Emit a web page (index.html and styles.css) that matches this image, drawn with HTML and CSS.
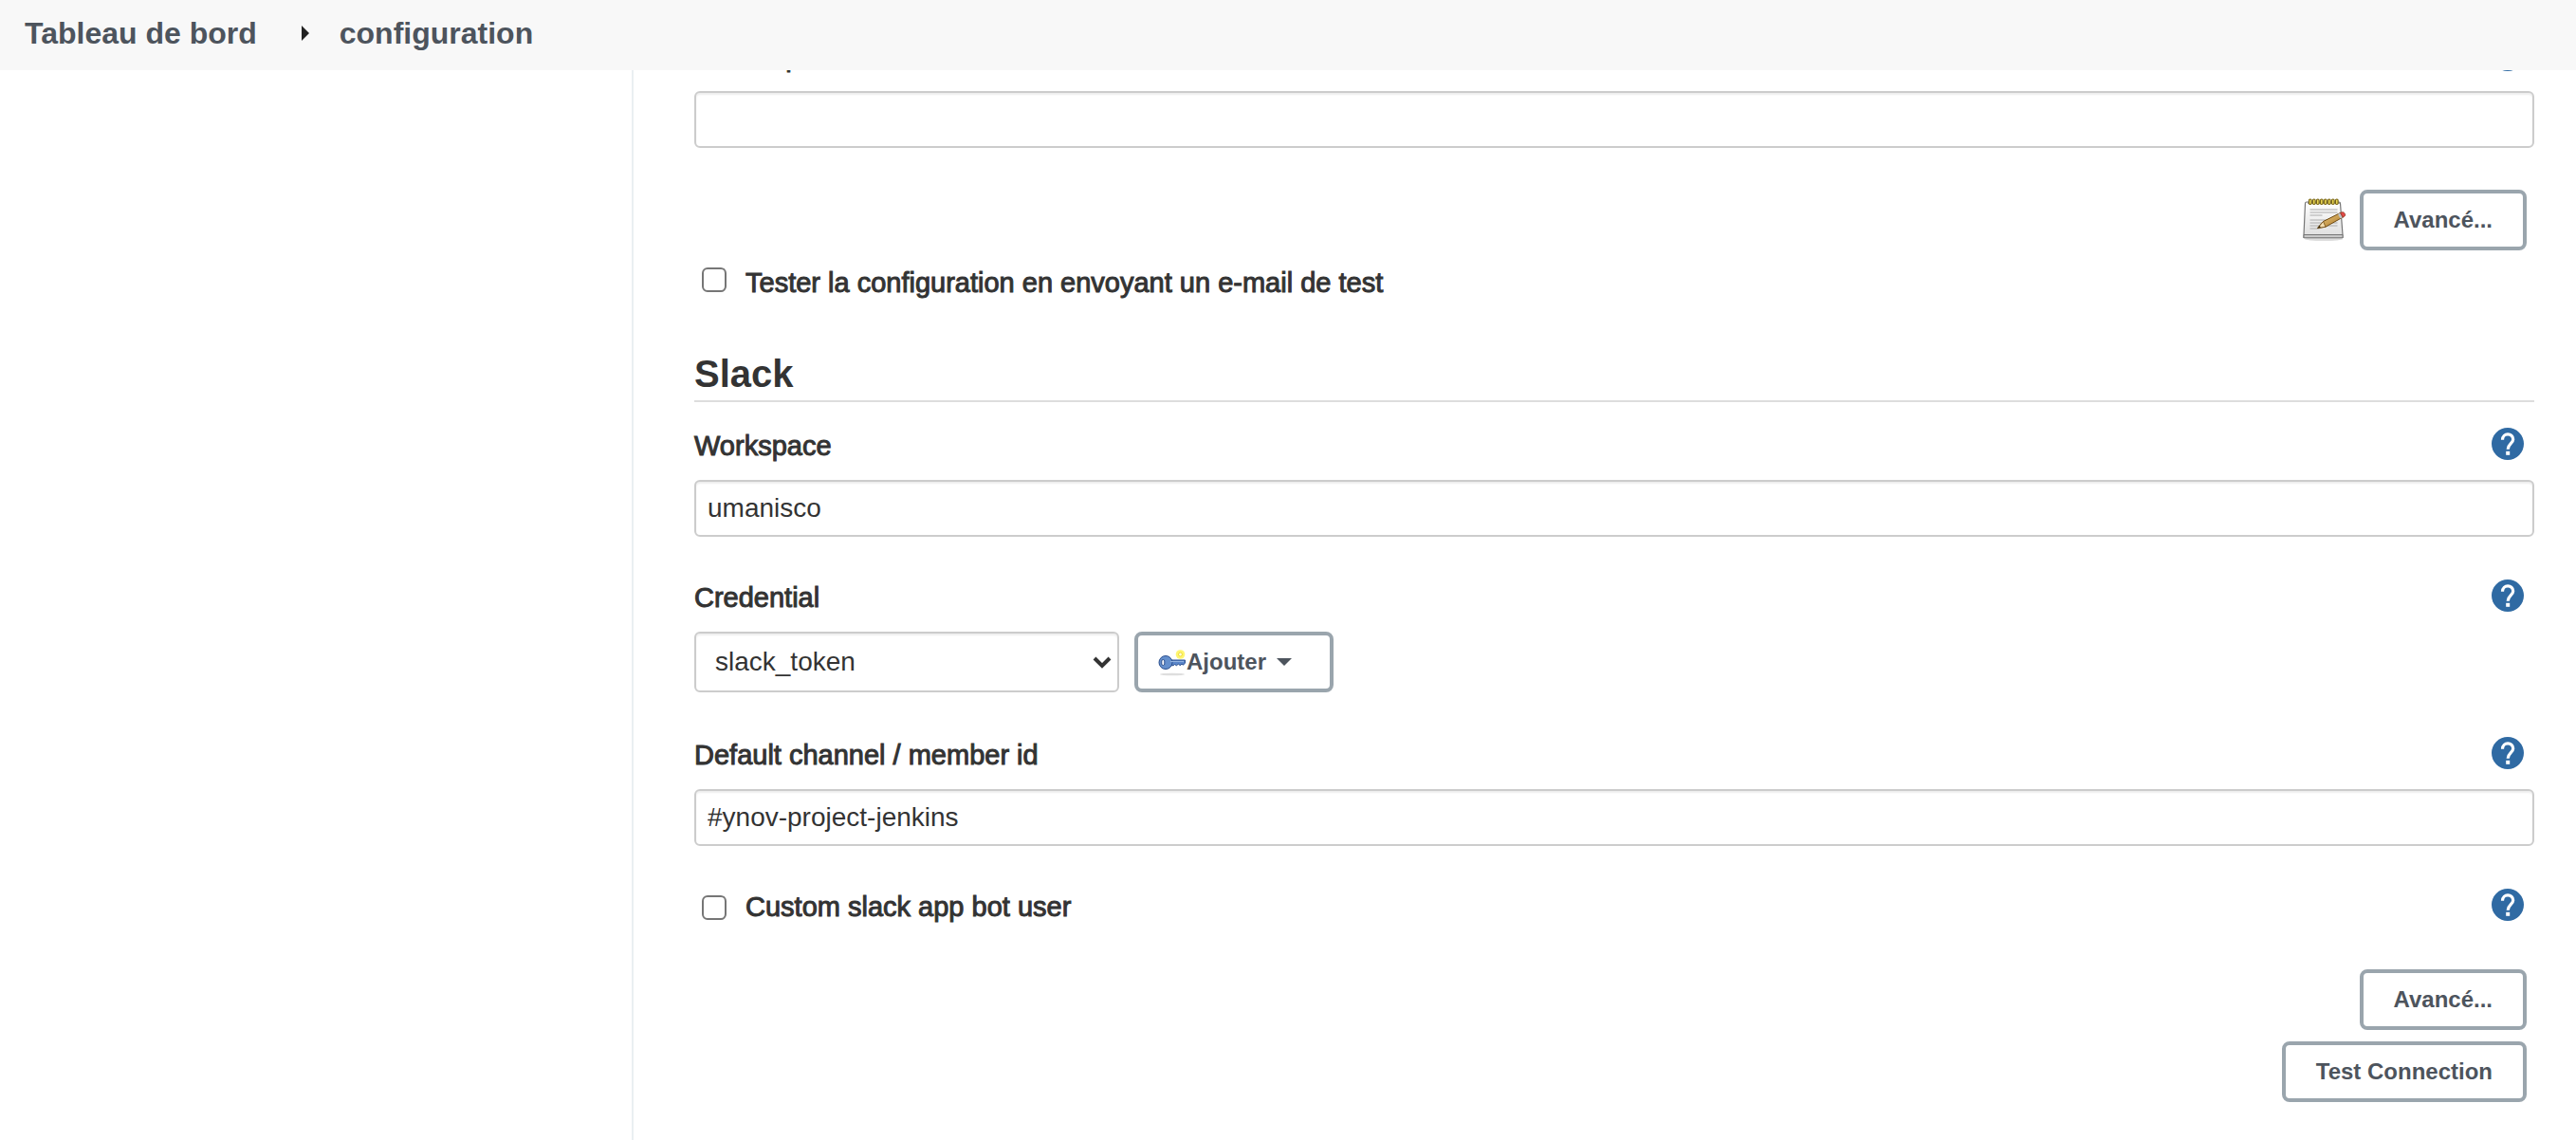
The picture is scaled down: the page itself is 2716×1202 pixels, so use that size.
FILE: index.html
```html
<!DOCTYPE html>
<html lang="fr">
<head>
<meta charset="utf-8">
<title>configuration</title>
<link rel="stylesheet" href="styles.css">
</head>
<body>
<svg class="sprite" aria-hidden="true">
  <symbol id="help" viewBox="0 0 34 34">
    <circle cx="17" cy="17" r="17" fill="#2f6aa3"/>
    <path d="M11.500 12.700C11.500 4.800 22.700 5.200 22.700 12.200C22.700 16.500 17.200 17 17.200 22.800" fill="none" stroke="#fff" stroke-width="3.200"/>
    <rect x="15.200" y="24.800" width="4" height="4" fill="#fff"/>
  </symbol>
</svg>
<header class="topbar">
  <nav class="crumbs" aria-label="Fil d'Ariane">
    <a href="#">Tableau de bord</a>
    <svg class="crumb-arrow" viewBox="0 0 8 16" aria-hidden="true"><path d="M0 0l8 8-8 8z" fill="#222"/></svg>
    <a href="#">configuration</a>
  </nav>
</header>
<div class="page">
  <aside class="side"></aside>
  <main class="content">
    <form>
      <div class="field">
        <div class="field-head">
          <label class="medium" for="suffix">Suffixe par défaut des emails des utilisateurs</label>
          <a class="help" href="#" aria-label="Aide"><svg viewBox="0 0 34 34"><use href="#help"/></svg></a>
        </div>
        <input class="text" id="suffix" type="text">
      </div>

      <div class="actions">
        <svg class="notepad" viewBox="0 0 48 48" aria-hidden="true">
          <defs>
            <linearGradient id="paper" x1="0" y1="0" x2="0" y2="1"><stop offset="0" stop-color="#fff"/><stop offset="1" stop-color="#dedede"/></linearGradient>
            <linearGradient id="wood" x1="0" y1="0" x2="1" y2="1"><stop offset="0" stop-color="#f0cf84"/><stop offset="1" stop-color="#a97425"/></linearGradient>
          </defs>
          <ellipse cx="24" cy="44" rx="20" ry="2" fill="#ddd"/>
          <path d="M6 5h34c1 0 1.500.5 1.500 1.500L44 39.500v3H3v-3L4.500 6.500C4.500 5.500 5 5 6 5z" fill="url(#paper)" stroke="#777" stroke-width="1.200"/>
          <path d="M3 39.500h41v3.300H3z" fill="#c9c9c9" stroke="#777"/>
          <path d="M9.500 13h29M9.500 16h29M9.500 19h13M9.500 24h29M9.500 27h29M9.500 30h29M9.500 33h10" stroke="#aaa" stroke-width="1"/>
          <path d="M7 6h34" stroke="#888" stroke-width="1.500"/>
          <g fill="#f5e35b" stroke="#776314" stroke-width="1.200"><rect x="8.500" y="2" width="2.600" height="5.500" rx="1.200"/><rect x="12.500" y="2" width="2.600" height="5.500" rx="1.200"/><rect x="16.500" y="2" width="2.600" height="5.500" rx="1.200"/><rect x="20.500" y="2" width="2.600" height="5.500" rx="1.200"/><rect x="24.500" y="2" width="2.600" height="5.500" rx="1.200"/><rect x="28.500" y="2" width="2.600" height="5.500" rx="1.200"/><rect x="32.500" y="2" width="2.600" height="5.500" rx="1.200"/><rect x="36.500" y="2" width="2.600" height="5.500" rx="1.200"/></g>
          <path d="M17.500 32.500l6-7L42 16.200l2.600 4.600L26 31.200z" fill="url(#wood)" stroke="#6f4a12" stroke-width="1"/>
          <path d="M17.500 32.500l6-7 2.500 5.700z" fill="#f3ddb0" stroke="#6f4a12" stroke-width=".8"/>
          <path d="M17.500 32.500l2.200-2.700 1.200 2z" fill="#3a2a10"/>
          <path d="M39 17.800l2.500-1.300 2.500 4.700-2.500 1.400z" fill="#bcc2c8"/>
          <path d="M41.500 16.400l1.800-.7c2-.5 4.200 2 3 4l-2.200 1.500z" fill="#e34848" stroke="#8b3a22" stroke-width=".8"/>
        </svg>
        <button class="btn" type="button">Avancé...</button>
      </div>

      <div class="check-row check-row-top">
        <input type="checkbox" id="test-mail">
        <label class="medium" for="test-mail">Tester la configuration en envoyant un e-mail de test</label>
      </div>

      <h2 class="section">Slack</h2>

      <div class="field">
        <div class="field-head">
          <label class="medium" for="workspace">Workspace</label>
          <a class="help" href="#" aria-label="Aide"><svg viewBox="0 0 34 34"><use href="#help"/></svg></a>
        </div>
        <input class="text" id="workspace" type="text" value="umanisco">
      </div>

      <div class="field">
        <div class="field-head">
          <label class="medium" for="credential">Credential</label>
          <a class="help" href="#" aria-label="Aide"><svg viewBox="0 0 34 34"><use href="#help"/></svg></a>
        </div>
        <div class="credential">
          <div class="select-wrap">
            <select id="credential"><option>slack_token</option></select>
            <svg class="chevron" viewBox="0 0 20 14" aria-hidden="true"><path d="M2 3l8 8 8-8" fill="none" stroke="#333" stroke-width="4"/></svg>
          </div>
          <button class="btn btn-add" type="button">
            <svg class="key" viewBox="0 0 30 30" aria-hidden="true">
              <ellipse cx="15" cy="28" rx="13" ry="1.300" fill="#dedede"/>
              <circle cx="23.500" cy="7" r="4.800" fill="#fff670"/>
              <circle cx="23.500" cy="7" r="2" fill="#fffde0" stroke="#f0dc3a"/>
              <path d="M12.500 13H28.500v3l-2 2.200-1.500-1.200-2 1.700-1.500-1.700-2 1.700-2-1.200-1.500 1.200h-3.500z" fill="#5b86c9" stroke="#2c4f8e"/>
              <ellipse cx="8" cy="15.500" rx="7" ry="7" fill="#648fcd" stroke="#2c4f8e"/>
              <path d="M13 14.500h14" stroke="#93b3e0"/>
              <rect x="3.800" y="12.500" width="3" height="6" rx="1.500" fill="#fff" stroke="#2c4f8e"/>
            </svg>
            <span>Ajouter</span>
            <svg class="caret" viewBox="0 0 16 8" aria-hidden="true"><path d="M0 0h16l-8 8z" fill="#4d545d"/></svg>
          </button>
        </div>
      </div>

      <div class="field">
        <div class="field-head">
          <label class="medium" for="channel">Default channel / member id</label>
          <a class="help" href="#" aria-label="Aide"><svg viewBox="0 0 34 34"><use href="#help"/></svg></a>
        </div>
        <input class="text" id="channel" type="text" value="#ynov-project-jenkins">
      </div>

      <div class="check-row">
        <input type="checkbox" id="bot-user">
        <label class="medium" for="bot-user">Custom slack app bot user</label>
        <a class="help" href="#" aria-label="Aide"><svg viewBox="0 0 34 34"><use href="#help"/></svg></a>
      </div>

      <div class="actions actions-stack">
        <button class="btn" type="button">Avancé...</button>
        <button class="btn" type="button">Test Connection</button>
      </div>
    </form>
  </main>
</div>
</body>
</html>
```
FILE: styles.css
```css
* { box-sizing: border-box; }

body {
  margin: 0;
  background: #fff;
  color: #333;
  font: 28px/40px "Liberation Sans", Arial, sans-serif;
}

.sprite { display: none; }
svg { display: block; flex: none; }

.topbar {
  position: sticky;
  top: 0;
  z-index: 2;
  height: 74px;
  padding: 15px 26px;
  background: #f8f8f8;
}

.crumbs { display: flex; align-items: center; font-size: 32px; font-weight: 700; }
.crumbs a { color: #4d545d; text-decoration: none; }
.crumb-arrow { width: 8px; height: 16px; margin: 0 32px 0 47px; }

/* The form is scrolled so that its first label sits under the top bar. */
.page {
  display: grid;
  grid-template-columns: 668px 1fr;
  min-height: 100vh;
  margin-top: -34px;
}

.side { border-right: 2px solid #eaeff2; }
.content { padding: 0 44px 0 64px; }

.medium { font-size: 29px; -webkit-text-stroke: 1px currentColor; }

.field { margin-bottom: 44px; }
.field-head { display: flex; justify-content: space-between; margin-bottom: 16px; }

.help { width: 34px; height: 34px; margin: 1px 11px 0 auto; }
.help svg { width: 34px; height: 34px; }

.text, select {
  display: block;
  width: 100%;
  height: 60px;
  padding: 0 12px;
  border: 2px solid #ccc;
  border-radius: 6px;
  background: #fff;
  box-shadow: inset 0 2px 2px #eee;
  color: #333;
  font: inherit;
}

.credential { display: flex; gap: 16px; margin-bottom: 46px; }
.select-wrap { position: relative; width: 448px; }
select { height: 64px; padding: 0 20px; appearance: none; }
.chevron { position: absolute; top: 25px; right: 8px; width: 20px; height: 14px; pointer-events: none; }

.btn {
  display: flex;
  align-items: center;
  height: 64px;
  padding: 0 32px;
  border: 4px solid #9aa5ad;
  border-radius: 8px;
  background: #fff;
  color: #4d545d;
  font: 700 24px/32px "Liberation Sans", Arial, sans-serif;
}
.btn-add { width: 210px; padding: 0 21px; }
.key { width: 30px; height: 30px; }
.caret { width: 16px; height: 8px; margin-left: 11px; }

.actions { display: flex; justify-content: flex-end; gap: 14px; margin-right: 8px; }
.notepad { width: 48px; height: 48px; margin-top: 8px; }
.actions-stack { flex-direction: column; align-items: flex-end; gap: 12px; margin-top: 46px; padding-bottom: 40px; }

.check-row { display: flex; align-items: flex-start; }
.check-row-top { margin: 14px 0 52px; }
.check-row input {
  appearance: none;
  width: 26px;
  height: 26px;
  margin: 8px 20px 0 8px;
  border: 2px solid #767676;
  border-radius: 6px;
  background: #fff;
}
.check-row-top input { margin-top: 4px; }

.section {
  margin: 0 0 26px;
  padding-bottom: 4px;
  border-bottom: 2px solid #ddd;
  font-size: 40px;
  line-height: 48px;
}
```
